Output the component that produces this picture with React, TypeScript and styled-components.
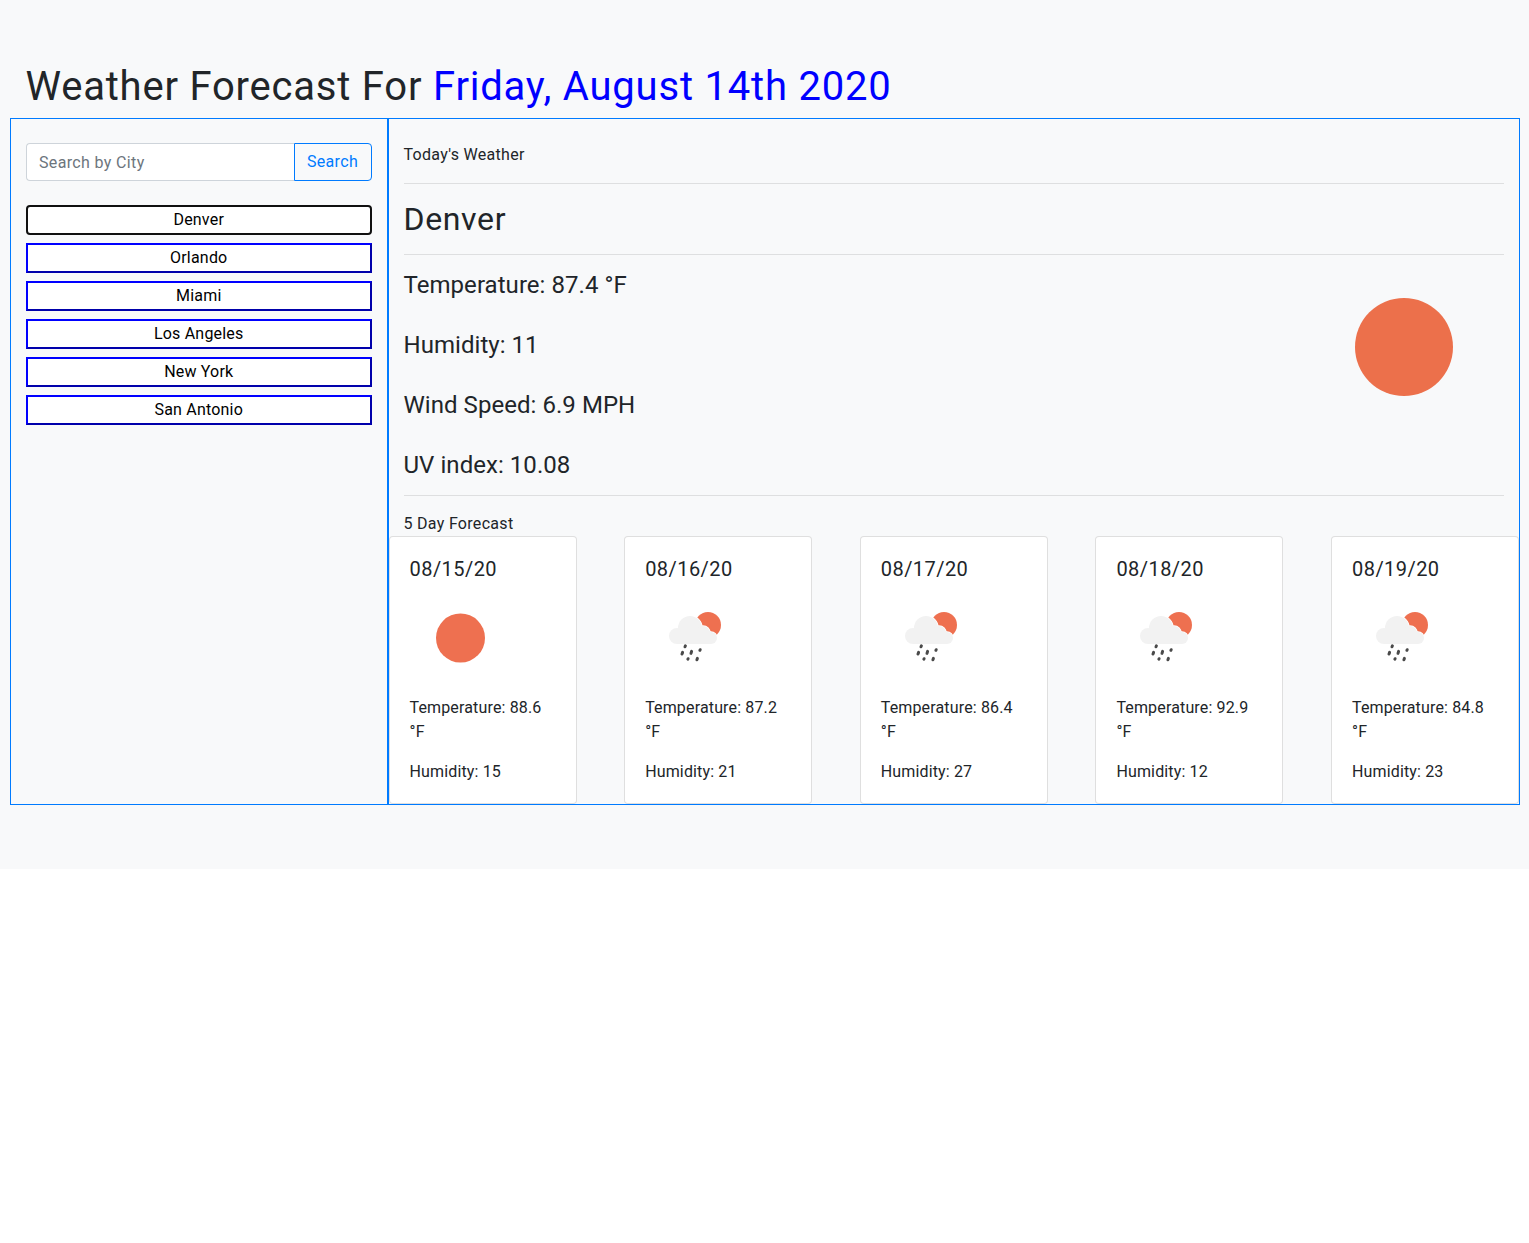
import React from "react";
import styled, { createGlobalStyle } from "styled-components";

const Global = createGlobalStyle`
  html, body { margin: 0; padding: 0; background: #fff; }
  body { font-family: Roboto, "Liberation Sans", sans-serif; font-size: 16px; line-height: 1.5; color: #212529; }
  * { box-sizing: border-box; }
`;

const Page = styled.div`
  background: #f8f9fa;
  padding: 62px 9px 64px 10px;
  height: 869px;
`;
const Title = styled.h1`
  margin: 0 0 8px 15.5px;
  font-size: 40px;
  font-weight: 400;
  line-height: 50px;
  height: 48px;
  letter-spacing: 0.79px;
  color: #212529;
`;
const DateText = styled.span`
  color: #0000ff;
`;
const Layout = styled.div`
  display: grid;
  grid-template-columns: 377.5px 1132.5px;
`;
const Side = styled.aside`
  border: 1px solid #007bff;
  padding: 24px 15px;
`;
const SearchGroup = styled.form`
  display: flex;
  height: 38px;
  margin: 0 0 24px;
`;
const SearchInput = styled.input`
  flex: 1;
  min-width: 0;
  height: 38px;
  padding: 6px 12px;
  font: inherit;
  color: #495057;
  background: #fff;
  border: 1px solid #ced4da;
  border-right: 0;
  border-radius: 4px 0 0 4px;
  outline: none;
  letter-spacing: 0.35px;
  &::placeholder { color: #6c757d; opacity: 1; }
`;
const SearchButton = styled.button`
  width: 78px;
  height: 38px;
  padding: 0;
  font: inherit;
  letter-spacing: 0.35px;
  color: #007bff;
  background: transparent;
  border: 1px solid #007bff;
  border-radius: 0 4px 4px 0;
`;
const CityList = styled.div`
  display: flex;
  flex-direction: column;
  gap: 8px;
`;
const CityButton = styled.button<{ $active?: boolean }>`
  height: 30px;
  padding: 0;
  font: inherit;
  letter-spacing: 0.2px;
  color: #000;
  background: #fff;
  border: 2px ${(p) => (p.$active ? "solid #101010" : "outset #0000ff")};
  border-radius: ${(p) => (p.$active ? "4px" : "0")};
`;
const Main = styled.main`
  border: 1px solid #007bff;
  padding-top: 24px;
`;
const Section = styled.div`
  padding: 0 15px;
`;
const Label = styled.div`
  height: 24px;
  letter-spacing: 0.3px;
`;
const Rule = styled.hr<{ $top: number; $bottom: number }>`
  margin: ${(p) => p.$top}px 0 ${(p) => p.$bottom}px;
  border: 0;
  border-top: 1px solid rgba(0, 0, 0, 0.1);
`;
const CityName = styled.h2`
  margin: 0;
  font-size: 32px;
  font-weight: 400;
  line-height: 38px;
  letter-spacing: 0.65px;
`;
const Today = styled.div`
  display: flex;
  justify-content: space-between;
  align-items: flex-start;
`;
const Stats = styled.div`
  display: flex;
  flex-direction: column;
  gap: 24px;
`;
const Stat = styled.p`
  margin: 0;
  font-size: 24px;
  line-height: 36px;
  letter-spacing: 0.05px;
`;
const BigIcon = styled.svg`
  display: block;
  width: 98px;
  height: 98px;
  margin: 31px 51px 0 0;
`;
const Cards = styled.div`
  display: flex;
  justify-content: space-between;
`;
const Card = styled.article`
  width: 188px;
  height: 268px;
  padding: 20px;
  background: #fff;
  border: 1px solid rgba(0, 0, 0, 0.125);
  border-radius: 4px;
`;
const CardDate = styled.h5`
  margin: 0 0 8px;
  font-size: 20px;
  font-weight: 400;
  line-height: 24px;
  letter-spacing: 0.45px;
`;
const CardIcon = styled.svg`
  display: block;
  width: 100px;
  height: 100px;
  margin-bottom: 7px;
`;
const CardText = styled.p`
  margin: 0 0 16px;
  letter-spacing: 0.15px;
`;

const Sun = () => (
  <CardIcon viewBox="0 0 100 100">
    <circle cx="50.5" cy="49" r="24.5" fill="#ee7050" />
  </CardIcon>
);

const Rain = () => (
  <CardIcon viewBox="0 0 100 100">
    <circle cx="63" cy="36" r="13" fill="#ee7050" />
    <g fill="#f2f2f2" stroke="#fff" strokeWidth="1.6">
      <circle cx="45" cy="39" r="12" />
      <circle cx="58" cy="44" r="7" />
      <circle cx="66" cy="49" r="6" />
    </g>
    <g fill="#f2f2f2">
      <circle cx="45" cy="39" r="12" />
      <circle cx="58" cy="44" r="7" />
      <circle cx="32" cy="47" r="8" />
      <circle cx="66" cy="49" r="6" />
      <rect x="32" y="42" width="34" height="13" />
    </g>
    <g stroke="#4a4a4a" strokeWidth="3" strokeLinecap="round">
      <path d="M40.4 56.8 40 57.8" />
      <path d="M37.6 63.4 37 65" />
      <path d="M46.6 62.4 46 64.4" />
      <path d="M55.2 60.7 54.9 61.3" />
      <path d="M43.1 69.7 42.9 70.1" />
      <path d="M52.4 69.4 51.9 70.8" />
    </g>
  </CardIcon>
);

const forecast = [
  { date: "08/15/20", temp: "88.6", hum: 15, sunny: true },
  { date: "08/16/20", temp: "87.2", hum: 21 },
  { date: "08/17/20", temp: "86.4", hum: 27 },
  { date: "08/18/20", temp: "92.9", hum: 12 },
  { date: "08/19/20", temp: "84.8", hum: 23 },
];
const cities = ["Denver", "Orlando", "Miami", "Los Angeles", "New York", "San Antonio"];

export default function App() {
  return (
    <Page>
      <Global />
      <Title>
        Weather Forecast For <DateText>Friday, August 14th 2020</DateText>
      </Title>
      <Layout>
        <Side>
          <SearchGroup onSubmit={(e) => e.preventDefault()}>
            <SearchInput placeholder="Search by City" />
            <SearchButton>Search</SearchButton>
          </SearchGroup>
          <CityList>
            {cities.map((c, i) => (
              <CityButton key={c} $active={i === 0}>{c}</CityButton>
            ))}
          </CityList>
        </Side>
        <Main>
          <Section>
            <Label>Today's Weather</Label>
            <Rule $top={16} $bottom={16} />
            <CityName>Denver</CityName>
            <Rule $top={16} $bottom={12} />
            <Today>
              <Stats>
                <Stat>Temperature: 87.4 °F</Stat>
                <Stat>Humidity: 11</Stat>
                <Stat>Wind Speed: 6.9 MPH</Stat>
                <Stat>UV index: 10.08</Stat>
              </Stats>
              <BigIcon viewBox="0 0 98 98">
                <circle cx="49" cy="49" r="49" fill="#ec704b" />
              </BigIcon>
            </Today>
            <Rule $top={12} $bottom={16} />
            <Label>5 Day Forecast</Label>
          </Section>
          <Cards>
            {forecast.map((f) => (
              <Card key={f.date}>
                <CardDate>{f.date}</CardDate>
                {f.sunny ? <Sun /> : <Rain />}
                <CardText>Temperature: {f.temp} °F</CardText>
                <CardText>Humidity: {f.hum}</CardText>
              </Card>
            ))}
          </Cards>
        </Main>
      </Layout>
    </Page>
  );
}
